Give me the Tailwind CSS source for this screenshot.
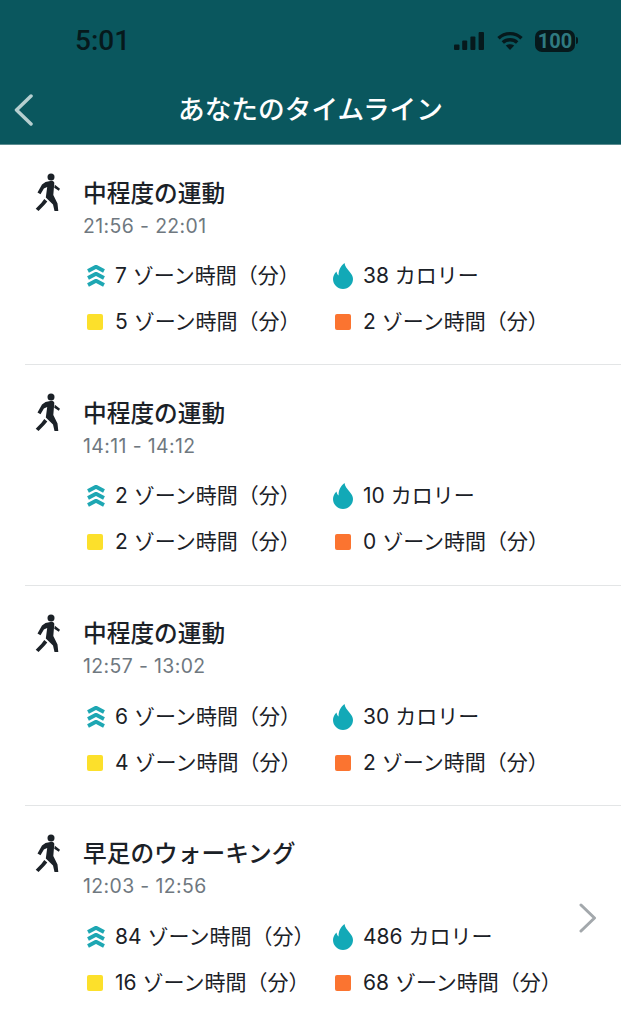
<!doctype html>
<html lang="ja"><head><meta charset="utf-8">
<script src="https://cdn.jsdelivr.net/npm/@tailwindcss/browser@4"></script>
</head>
<body class="bg-white overflow-hidden font-['Inter','Noto_Sans_CJK_JP',sans-serif] text-[#1b2127]">
<svg class="hidden"><defs>
<symbol id="walk" viewBox="0 0 26 38"><circle cx="16" cy="4" r="3.500"/><path d="M7 11.500 10.500 9l6-1.200c1.500-.2 2.600.8 2.800 2.200L18.300 22l4.200 8.500.8 7.500h-3.800L18 31.500 10.800 24.500 12.200 14l-3.300 1.500-3.400 5.700L2.500 19.500z"/><path d="M19.900 11.800l5.100 3.900-1.200 2-4.600-3zM9.300 26l3 2.600-2.500 3L3.500 38 .7 35.800 6.300 30z"/></symbol>
<symbol id="chev" viewBox="0 0 20 24"><path d="M2 7 10 2.800 18 7M2 14 10 9.800l8 4.200M2 21 10 16.800 18 21" fill="none" stroke="currentColor" stroke-width="3.800" stroke-linejoin="round"/></symbol>
<symbol id="flame" viewBox="0 0 20 26"><path d="M11.500 0c.6 3.700 2.500 5.600 4.700 8.200 2.200 2.500 3.800 5 3.800 7.900C20 21.700 15.500 26 10 26S0 21.700 0 16.100c0-3.100 1.400-5.700 3.600-7.700.1 1.700.8 3.100 2 4C5.400 7.500 7.500 3 11.500 0z"/></symbol>
</defs></svg>

<header class="h-[145px] bg-[#0a575e] border-b border-[#5b8c90] flex flex-col">
  <div class="h-[81px] pl-[75px] pr-[43px] flex items-center justify-between text-[#06191c]">
    <span class="mt-[1px] text-[28px] leading-none font-medium font-['Roboto',sans-serif]">5:01</span>
    <div class="flex items-center">
      <svg width="30" height="18" viewBox="0 0 30 18" fill="currentColor"><rect x="0" y="12.500" width="5.500" height="5.500" rx="1"/><rect x="8.200" y="8.500" width="5" height="9.500" rx="1"/><rect x="16.400" y="4.500" width="5" height="13.500" rx="1"/><rect x="24.600" y="0" width="5.400" height="18" rx="1"/></svg>
      <svg class="ml-[13px]" width="26" height="19" viewBox="0 0 26 19" fill="none" stroke="currentColor" stroke-width="3.400"><path d="M1.500 7.300c6.300-6.200 16.700-6.200 23 0M5.800 11.500c4-3.700 10.400-3.700 14.400 0"/><path d="M13 19 8.800 14.500c2.400-1.700 6-1.700 8.400 0z" fill="currentColor" stroke="none"/></svg>
      <div class="ml-[12px] flex items-center gap-[1px]">
        <span class="w-[40px] h-[22px] rounded-[7px] bg-[#06191c] text-[#2f7a80] text-[20px] leading-none font-bold font-['Roboto',sans-serif] flex items-center justify-center">100</span>
        <span class="w-[2px] h-[7px] rounded-r-sm bg-[#06191c]"></span>
      </div>
    </div>
  </div>
  <div class="relative flex-1 flex items-start justify-center">
    <svg class="absolute left-[13px] top-[13px]" width="22" height="32" viewBox="0 0 22 32" fill="none" stroke="#b6cfd0" stroke-width="3.500" stroke-linecap="round" stroke-linejoin="round"><path d="M18 2 3.500 16 18 30"/></svg>
    <h1 class="mt-[11px] text-[26.700px] leading-[34px] font-medium text-white">あなたのタイムライン</h1>
  </div>
</header>

<main>
  <section class="h-[220.300px] ml-[25px] border-b border-[#e3e5e6] flex">
    <svg class="w-[26px] h-[38px] mt-[28px] ml-[10px] fill-[#1b2127]"><use href="#walk"/></svg>
    <div class="ml-[22px] flex-1">
      <h2 class="mt-[32.500px] text-[23.700px] leading-[32px] font-medium">中程度の運動</h2>
      <p class="mt-[3px] text-[19.400px] leading-[26px] tracking-[.4px] text-[#6f7880]">21:56 - 22:01</p>
      <div class="mt-[23.500px] ml-[1px] grid grid-cols-[248px_1fr] gap-y-[18px] text-[21px] leading-[28px]">
        <div class="flex items-center"><svg class="w-[20px] h-[24px] ml-[2px] mr-[9px] text-[#1ea7b3]"><use href="#chev"/></svg>7 ゾーン時間（分）</div>
        <div class="flex items-center"><svg class="w-[20px] h-[26px] ml-[1px] mr-[10px] fill-[#12a9b7]"><use href="#flame"/></svg>38 カロリー</div>
        <div class="flex items-center"><span class="w-[16px] h-[16px] ml-[3px] mr-[12px] rounded-[2px] bg-[#fce02b]"></span>5 ゾーン時間（分）</div>
        <div class="flex items-center"><span class="w-[16px] h-[16px] ml-[3px] mr-[12px] rounded-[2px] bg-[#fb7430]"></span>2 ゾーン時間（分）</div>
      </div>
    </div>
  </section>
  <section class="h-[220.300px] ml-[25px] border-b border-[#e3e5e6] flex">
    <svg class="w-[26px] h-[38px] mt-[28px] ml-[10px] fill-[#1b2127]"><use href="#walk"/></svg>
    <div class="ml-[22px] flex-1">
      <h2 class="mt-[32.500px] text-[23.700px] leading-[32px] font-medium">中程度の運動</h2>
      <p class="mt-[3px] text-[19.400px] leading-[26px] tracking-[.4px] text-[#6f7880]">14:11 - 14:12</p>
      <div class="mt-[23.500px] ml-[1px] grid grid-cols-[248px_1fr] gap-y-[18px] text-[21px] leading-[28px]">
        <div class="flex items-center"><svg class="w-[20px] h-[24px] ml-[2px] mr-[9px] text-[#1ea7b3]"><use href="#chev"/></svg>2 ゾーン時間（分）</div>
        <div class="flex items-center"><svg class="w-[20px] h-[26px] ml-[1px] mr-[10px] fill-[#12a9b7]"><use href="#flame"/></svg>10 カロリー</div>
        <div class="flex items-center"><span class="w-[16px] h-[16px] ml-[3px] mr-[12px] rounded-[2px] bg-[#fce02b]"></span>2 ゾーン時間（分）</div>
        <div class="flex items-center"><span class="w-[16px] h-[16px] ml-[3px] mr-[12px] rounded-[2px] bg-[#fb7430]"></span>0 ゾーン時間（分）</div>
      </div>
    </div>
  </section>
  <section class="h-[220.300px] ml-[25px] border-b border-[#e3e5e6] flex">
    <svg class="w-[26px] h-[38px] mt-[28px] ml-[10px] fill-[#1b2127]"><use href="#walk"/></svg>
    <div class="ml-[22px] flex-1">
      <h2 class="mt-[32.500px] text-[23.700px] leading-[32px] font-medium">中程度の運動</h2>
      <p class="mt-[3px] text-[19.400px] leading-[26px] tracking-[.4px] text-[#6f7880]">12:57 - 13:02</p>
      <div class="mt-[23.500px] ml-[1px] grid grid-cols-[248px_1fr] gap-y-[18px] text-[21px] leading-[28px]">
        <div class="flex items-center"><svg class="w-[20px] h-[24px] ml-[2px] mr-[9px] text-[#1ea7b3]"><use href="#chev"/></svg>6 ゾーン時間（分）</div>
        <div class="flex items-center"><svg class="w-[20px] h-[26px] ml-[1px] mr-[10px] fill-[#12a9b7]"><use href="#flame"/></svg>30 カロリー</div>
        <div class="flex items-center"><span class="w-[16px] h-[16px] ml-[3px] mr-[12px] rounded-[2px] bg-[#fce02b]"></span>4 ゾーン時間（分）</div>
        <div class="flex items-center"><span class="w-[16px] h-[16px] ml-[3px] mr-[12px] rounded-[2px] bg-[#fb7430]"></span>2 ゾーン時間（分）</div>
      </div>
    </div>
  </section>
  <section class="relative h-[219px] ml-[25px] flex">
    <svg class="w-[26px] h-[38px] mt-[28px] ml-[10px] fill-[#1b2127]"><use href="#walk"/></svg>
    <div class="ml-[22px] flex-1">
      <h2 class="mt-[32.500px] text-[23.700px] leading-[32px] font-medium">早足のウォーキング</h2>
      <p class="mt-[3px] text-[19.400px] leading-[26px] tracking-[.4px] text-[#6f7880]">12:03 - 12:56</p>
      <div class="mt-[23.500px] ml-[1px] grid grid-cols-[248px_1fr] gap-y-[18px] text-[21px] leading-[28px]">
        <div class="flex items-center"><svg class="w-[20px] h-[24px] ml-[2px] mr-[9px] text-[#1ea7b3]"><use href="#chev"/></svg>84 ゾーン時間（分）</div>
        <div class="flex items-center"><svg class="w-[20px] h-[26px] ml-[1px] mr-[10px] fill-[#12a9b7]"><use href="#flame"/></svg>486 カロリー</div>
        <div class="flex items-center"><span class="w-[16px] h-[16px] ml-[3px] mr-[12px] rounded-[2px] bg-[#fce02b]"></span>16 ゾーン時間（分）</div>
        <div class="flex items-center"><span class="w-[16px] h-[16px] ml-[3px] mr-[12px] rounded-[2px] bg-[#fb7430]"></span>68 ゾーン時間（分）</div>
      </div>
    </div>
    <svg class="absolute right-[24px] top-[97px]" width="18" height="30" viewBox="0 0 18 30" fill="none" stroke="#a3a8ac" stroke-width="3" stroke-linecap="round" stroke-linejoin="round"><path d="M2 2 15.500 15 2 28"/></svg>
  </section>
</main>
</body></html>
